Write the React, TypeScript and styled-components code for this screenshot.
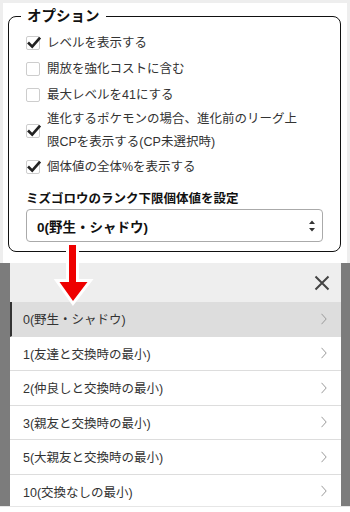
import React from "react";
import styled, {createGlobalStyle} from "styled-components";

const GlobalStyle = createGlobalStyle`
    html, body {
        margin: 0;
        padding: 0;
        background: #ffffff;
    }
    body {
        font-family: "Liberation Sans", "Noto Sans CJK JP", sans-serif;
        color: #222;
    }
`;

type Option = { id: number, label: string, checked: boolean };
type Rank = { id: number, label: string };

const options: Option[] = [
    {id: 1, label: 'レベルを表示する', checked: true},
    {id: 2, label: '開放を強化コストに含む', checked: false},
    {id: 3, label: '最大レベルを41にする', checked: false},
    {id: 4, label: '進化するポケモンの場合、進化前のリーグ上限CPを表示する(CP未選択時)', checked: true},
    {id: 5, label: '個体値の全体%を表示する', checked: true},
];

const ranks: Rank[] = [
    {id: 0, label: '0(野生・シャドウ)'},
    {id: 1, label: '1(友達と交換時の最小)'},
    {id: 2, label: '2(仲良しと交換時の最小)'},
    {id: 3, label: '3(親友と交換時の最小)'},
    {id: 5, label: '5(大親友と交換時の最小)'},
    {id: 10, label: '10(交換なしの最小)'},
];

const Page = styled.div`
    position: relative;
    width: 350px;
    height: 512px;
    display: flex;
    flex-direction: column;
    overflow: hidden;
`;

const Top = styled.div`
    height: 263px;
    box-sizing: border-box;
    border: 3px solid #eeeeee;
    border-bottom: none;
    padding: 3px 6px 0 5px;
    background: #ffffff;
`;

const Fieldset = styled.fieldset`
    margin: 0;
    padding: 4px 17px 9px 17px;
    border: 1.5px solid #111;
    border-radius: 8px;
    min-width: 0;
`;

const Legend = styled.legend`
    margin-left: -5px;
    padding: 0 6px;
    font-size: 14.5px;
    line-height: 20px;
    font-weight: bold;
    color: #111;
`;

const CheckRow = styled.label`
    display: flex;
    align-items: center;
    gap: 7px;
    min-height: 26px;
    padding-right: 20px;
    font-size: 12.5px;
    line-height: 23px;
    color: #333;
`;

const Box = styled.span`
    flex: none;
    position: relative;
    width: 14px;
    height: 14px;
    box-sizing: border-box;
    border: 1px solid #cdcdcd;
    border-radius: 2px;
    background: #fff;

    svg {
        position: absolute;
        left: -1px;
        top: -2px;
        overflow: visible;
    }
`;

const RowText = styled.span`
    flex: 1;
`;

const FieldLabel = styled.div`
    margin-top: 10px;
    font-size: 12.5px;
    line-height: 18px;
    font-weight: bold;
    color: #111;
`;

const Select = styled.div`
    margin-top: 1px;
    height: 33px;
    box-sizing: border-box;
    border: 1px solid #aaaaaa;
    border-radius: 4px;
    display: flex;
    align-items: center;
    justify-content: space-between;
    padding: 0 6px 0 10px;
    font-size: 13.5px;
    font-weight: bold;
    color: #111;
`;

const Overlay = styled.div`
    flex: 1;
    display: flex;
    flex-direction: column;
    background: #7c7c7c;
    padding: 0 9px 0 10px;
    min-height: 0;
`;

const Modal = styled.div`
    flex: 1;
    background: #ffffff;
    overflow: hidden;
    display: flex;
    flex-direction: column;
`;

const ModalHeader = styled.div`
    flex: none;
    height: 39px;
    background-color: #eeeeee;
    background-image: radial-gradient(#e4e4e4 0.6px, transparent 0.6px);
    background-size: 4px 4px;
    display: flex;
    align-items: center;
    justify-content: flex-end;
    padding-right: 11px;
`;

const Item = styled.div<{ selected?: boolean }>`
    flex: none;
    height: 34.5px;
    box-sizing: border-box;
    display: flex;
    align-items: center;
    justify-content: space-between;
    padding: 0 14px 0 ${ props => props.selected ? 11 : 13 }px;
    border-left: ${ props => props.selected ? '2px solid #333' : 'none' };
    border-bottom: 1px solid #dddddd;
    background: ${ props => props.selected ? '#dddddd' : '#ffffff' };
    font-size: 12.5px;
    color: #333;
`;

const Bottom = styled.div`
    flex: none;
    height: 5px;
    background: #ffffff;
    border-top: 1px solid #e6e6e6;
`;

const Arrow = styled.svg`
    position: absolute;
    left: 55px;
    top: 240px;
    overflow: visible;
`;

const CheckIcon = () =>
    <svg width="16" height="16" viewBox="0 0 16 16">
        <path d="M3 8.5 L6.2 11.6 L13.2 3.6" fill="none" stroke="#222" strokeWidth="2.7"
              strokeLinecap="square" strokeLinejoin="miter"/>
    </svg>;

const SelectArrows = () =>
    <svg width="8" height="14" viewBox="0 0 8 14">
        <path d="M1 5 L4 1.5 L7 5 Z" fill="#333"/>
        <path d="M1 9 L4 12.5 L7 9 Z" fill="#333"/>
    </svg>;

const CloseIcon = () =>
    <svg width="16" height="16" viewBox="0 0 16 16">
        <path d="M1.5 1.5 L14.5 14.5 M14.5 1.5 L1.5 14.5" stroke="#444" strokeWidth="2" fill="none"/>
    </svg>;

const Chevron = () =>
    <svg width="6" height="12" viewBox="0 0 6 12">
        <path d="M0.5 0.8 L5.2 6 L0.5 11.2" stroke="#9a9a9a" strokeWidth="1" fill="none"/>
    </svg>;

export default function App() {
    return <Page>
        <GlobalStyle/>
        <Top>
            <Fieldset>
                <Legend>オプション</Legend>
                {options.map(option =>
                    <CheckRow key={option.id}>
                        <Box>{option.checked && <CheckIcon/>}</Box>
                        <RowText>{option.label}</RowText>
                    </CheckRow>)}
                <FieldLabel>ミズゴロウのランク下限個体値を設定</FieldLabel>
                <Select>
                    <span>0(野生・シャドウ)</span>
                    <SelectArrows/>
                </Select>
            </Fieldset>
        </Top>
        <Overlay>
            <Modal>
                <ModalHeader><CloseIcon/></ModalHeader>
                {ranks.map((rank, idx) =>
                    <Item key={rank.id} selected={idx === 0}>
                        <span>{rank.label}</span>
                        <Chevron/>
                    </Item>)}
            </Modal>
        </Overlay>
        <Bottom/>
        <Arrow width="40" height="70" viewBox="0 0 40 70">
            <path d="M14 5 H21 V42 H32.5 L18 61 L4.5 42 H14 Z" fill="#ee0000" stroke="#ffffff"
                  strokeWidth="6" strokeLinejoin="miter" paintOrder="stroke"/>
        </Arrow>
    </Page>;
}
